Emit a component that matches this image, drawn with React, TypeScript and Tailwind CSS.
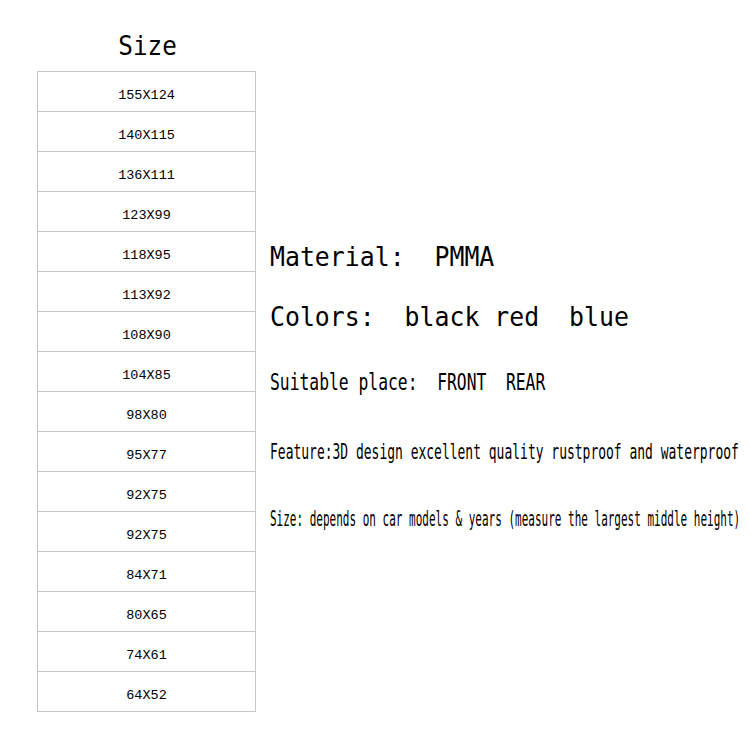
const sizes = [
  '155X124',
  '140X115',
  '136X111',
  '123X99',
  '118X95',
  '113X92',
  '108X90',
  '104X85',
  '98X80',
  '95X77',
  '92X75',
  '92X75',
  '84X71',
  '80X65',
  '74X61',
  '64X52',
]

export default function App() {
  return (
    <div className="flex h-[750px] w-[750px] overflow-hidden bg-white text-black">
      <div className="ml-[37px] flex w-[219px] shrink-0 flex-col">
        <div className="flex h-[71px] items-end justify-center pb-[12px]">
          <h1 className="ml-[3px] scale-x-[0.9] whitespace-pre font-['DejaVu_Sans_Mono',monospace] text-[27px] leading-none">
            Size
          </h1>
        </div>
        <div className="border-l border-r border-t border-[#c6c6c6]">
          {sizes.map((s, i) => (
            <div
              key={i}
              className="flex h-[40px] items-center justify-center border-b border-[#c6c6c6] pt-[9px] font-['Liberation_Mono',monospace] text-[13.5px] leading-none"
            >
              {s}
            </div>
          ))}
        </div>
      </div>

      <div className="ml-[14px] flex min-w-0 flex-col whitespace-pre pt-[243px] font-['DejaVu_Sans_Mono',monospace]">
        <p className="origin-left scale-x-[0.92] text-[27px] leading-none">Material:  PMMA</p>
        <p className="mt-[33px] origin-left scale-x-[0.92] text-[27px] leading-none">
          Colors:  black red  blue
        </p>
        <p className="mt-[41px] origin-left scale-x-[0.71] text-[23px] leading-none">
          Suitable place:  FRONT  REAR
        </p>
        <p className="mt-[47px] origin-left scale-x-[0.59] text-[22px] leading-none">
          Feature:3D design excellent quality rustproof and waterproof
        </p>
        <p className="mt-[45px] origin-left scale-x-[0.5] text-[22px] leading-none">
          Size: depends on car models &amp; years (measure the largest middle height)
        </p>
      </div>
    </div>
  )
}
